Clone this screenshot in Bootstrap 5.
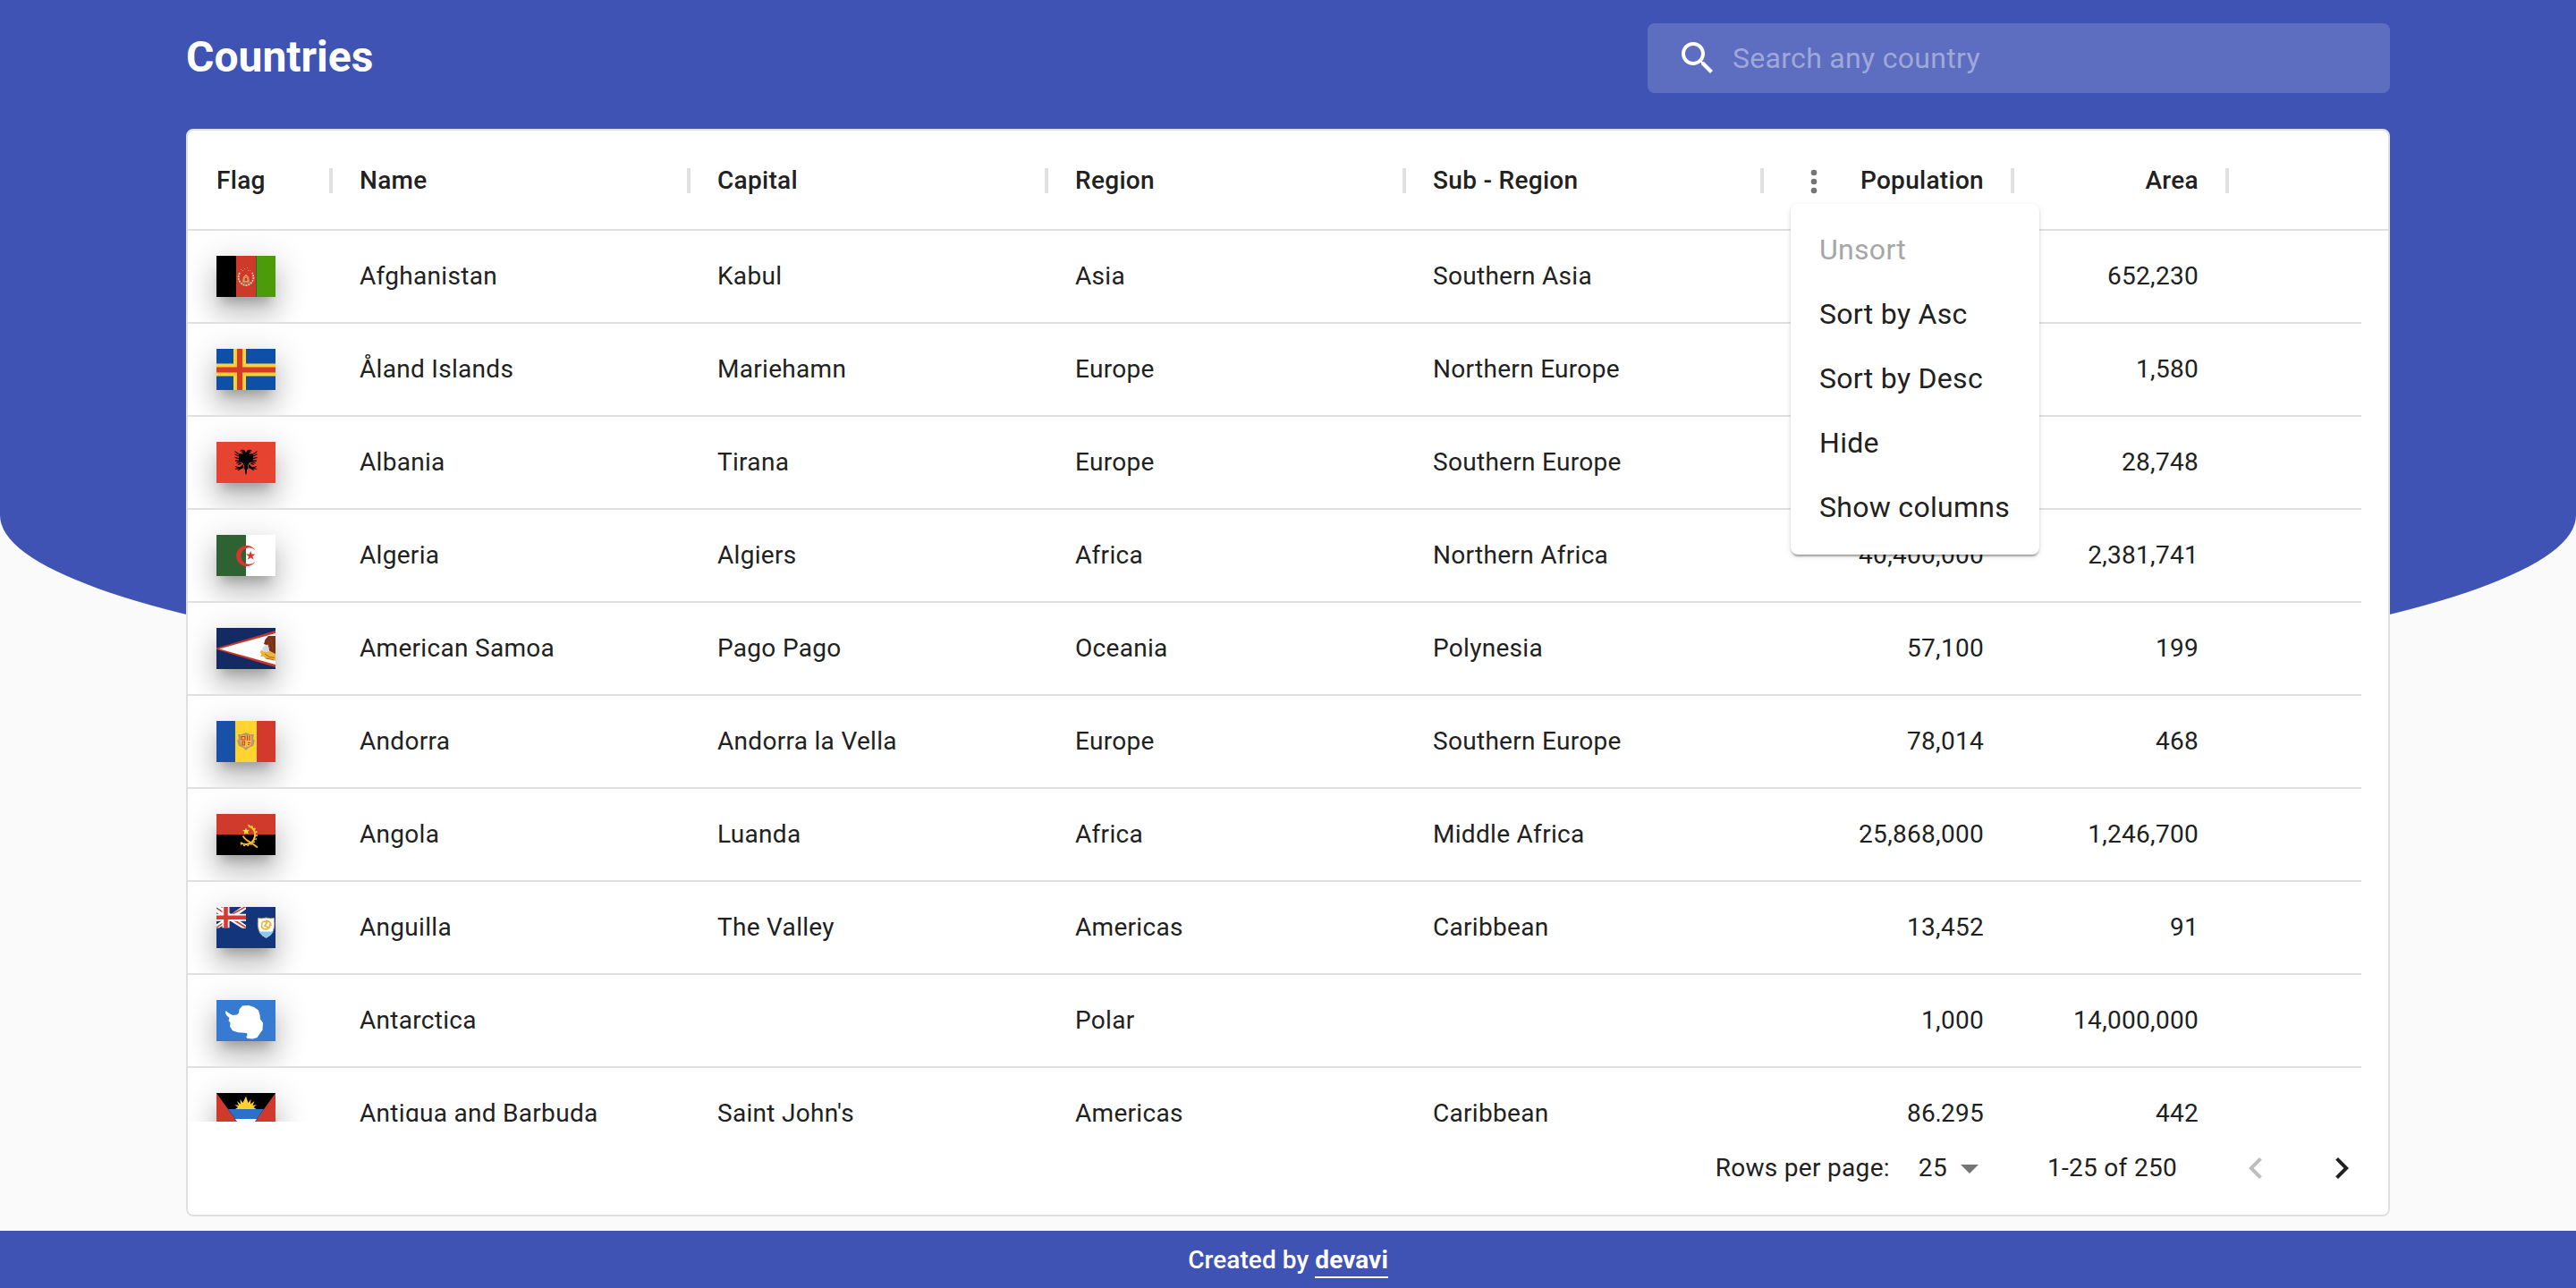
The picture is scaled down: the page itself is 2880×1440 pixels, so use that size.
<!DOCTYPE html>
<html lang="en">
<head>
<meta charset="utf-8">
<title>Countries</title>
<link href="https://cdn.jsdelivr.net/npm/bootstrap@5.3.0/dist/css/bootstrap.min.css" rel="stylesheet">
<style>
:root{--brand:#3f53b4;--line:#e0e0e0;--ink:#212121}
html,body{height:100%}
body{font-family:Roboto,"Liberation Sans",sans-serif;font-size:28px;line-height:1.43;letter-spacing:.3px;color:var(--ink);background:#fafafa;overflow:hidden}
.backdrop-curve{height:790px;background:var(--brand);border-radius:0 0 50% 50%/0 0 214px 214px;z-index:-1}
.page-wrap{width:2464px}
.top-bar{height:144px;padding-top:26px}
.page-title{font-size:48px;font-weight:700;line-height:1;letter-spacing:0;margin-top:14px}
.search-box{width:830px;height:78px;border-radius:8px;background:rgba(255,255,255,.16);padding:0 32px}
.search-box input{background:none;border:0;outline:0;color:#fff;font-size:32px;letter-spacing:.3px;padding:0;margin:2px 0 0 15px;height:40px}
.search-box input::placeholder{color:#9fa8da;opacity:1}
.grid-card{height:1216px;border:2px solid var(--line);border-radius:8px}
.grid-head{height:112px;border-bottom:2px solid var(--line);font-weight:500}
.grid-body{height:996px}
.grid-line{height:104px;width:2430px;border-bottom:2px solid var(--line)}
.cell{padding:0 32px;overflow:hidden;white-space:nowrap;display:flex;align-items:center;height:100%;flex:none}
.grid-head .cell{overflow:visible;position:relative;padding-top:3px}
.grid-head .cell::after{content:"";position:absolute;right:-2px;top:42px;width:4px;height:28px;background:var(--line)}
.c-flag{width:160px}.c-text{width:400px}.c-pop{width:280px;justify-content:flex-end}.c-area{width:240px;justify-content:flex-end}
.flag{width:66px;height:46px;flex:none;display:block;box-shadow:0 12px 12px -6px rgba(0,0,0,.2),0 20px 28px 2px rgba(0,0,0,.14),0 8px 36px 6px rgba(0,0,0,.12)}
.dots{margin-right:32px}
.col-menu{left:1792px;top:82px;width:278px;padding:16px 0;border:0;border-radius:8px;background:#fff;z-index:5;font-size:32px;box-shadow:0 4px 2px -2px rgba(0,0,0,.2),0 2px 2px rgba(0,0,0,.14),0 2px 6px rgba(0,0,0,.12)}
.col-menu .dropdown-item{height:72px;line-height:48px;padding:11px 32px 13px;color:var(--ink)}
.col-menu .disabled{color:#a6a6a6}
.pager{height:104px;padding-right:4px}
.pager-size{margin-left:32px}
.pager-size svg{margin:0 -1px 0 1px}
.pager-range{margin:0 40px 0 64px}
.pager-btn{width:96px;height:96px;padding:0;border:0;background:none}
.site-foot{height:64px;margin-top:16px;padding-top:2px;background:var(--brand);font-weight:500;letter-spacing:.08px}
.site-foot a{color:#fff;font-weight:700;border-bottom:2px solid #fff;padding-bottom:2px}
svg{display:block}
</style>
<script src="https://cdn.jsdelivr.net/npm/bootstrap@5.3.0/dist/js/bootstrap.bundle.min.js"></script>
</head>
<body>
<div class="backdrop-curve position-absolute top-0 start-0 w-100"></div>
<div class="page-wrap mx-auto">
  <header class="top-bar d-flex justify-content-between align-items-start">
    <h1 class="page-title text-white mb-0">Countries</h1>
    <label class="search-box d-flex align-items-center">
      <svg width="48" height="48" viewBox="0 0 24 24" fill="#fff"><path d="M15.5 14h-.79l-.28-.27C15.41 12.59 16 11.11 16 9.5 16 5.91 13.09 3 9.5 3S3 5.91 3 9.5 5.91 16 9.5 16c1.61 0 3.09-.59 4.23-1.57l.27.28v.79l5 4.99L20.49 19l-4.99-5zm-6 0C7.01 14 5 11.99 5 9.5S7.01 5 9.5 5 14 7.01 14 9.5 11.99 14 9.5 14z"/></svg>
      <input class="flex-grow-1" type="text" placeholder="Search any country">
    </label>
  </header>

  <main class="grid-card bg-white position-relative">
    <div class="grid-head d-flex">
      <div class="cell c-flag">Flag</div><div class="cell c-text">Name</div><div class="cell c-text">Capital</div><div class="cell c-text">Region</div><div class="cell c-text">Sub - Region</div>
      <div class="cell c-pop"><svg class="dots" width="40" height="40" viewBox="0 0 24 24" fill="#757575"><circle cx="12" cy="6" r="2"/><circle cx="12" cy="12" r="2"/><circle cx="12" cy="18" r="2"/></svg>Population</div>
      <div class="cell c-area">Area</div>
    </div>
    <div class="grid-body overflow-hidden">
      <div class="grid-line d-flex"><div class="cell c-flag">
        <svg class="flag" viewBox="0 0 66 46"><path fill="#000" d="M0 0h22v46H0z"/><path fill="#cd3a2a" d="M22 0h22v46H22z"/><path fill="#4b9b0b" d="M44 0h22v46H44z"/><path fill="#2c6340" d="M44 0h1v46h-1z"/><path d="M26 19q-3 6 .5 10.500 3 3.500 6.500 3.500t6.500-3.500q3.500-4.500.5-10.500" fill="none" stroke="#f0d3b5" stroke-width="1.800" stroke-dasharray="2 1"/><path d="M29.500 28.500l1-4.500 2.500-3 2.500 3 1 4.500zM28.500 30h9" fill="#dd7d4c" stroke="#eebd90" stroke-width=".7"/><path d="M32 25h2v3h-2z" fill="#b8321f"/><path d="M31 14.500h1m2-1h1m0 3h1m-7 0h1m-3-1h1m9 1h1" stroke="#f09a60"/></svg>
      </div><div class="cell c-text">Afghanistan</div><div class="cell c-text">Kabul</div><div class="cell c-text">Asia</div><div class="cell c-text">Southern Asia</div><div class="cell c-pop">27,657,145</div><div class="cell c-area">652,230</div></div>

      <div class="grid-line d-flex"><div class="cell c-flag">
        <svg class="flag" viewBox="0 0 66 46"><path fill="#0e4fa8" d="M0 0h66v46H0z"/><path fill="#ffd130" d="M19 0h14v46H19zM0 16.500h66v14H0z"/><path fill="#d63a2a" d="M23 0h6v46h-6zM0 20.500h66v6H0z"/></svg>
      </div><div class="cell c-text">Åland Islands</div><div class="cell c-text">Mariehamn</div><div class="cell c-text">Europe</div><div class="cell c-text">Northern Europe</div><div class="cell c-pop">28,875</div><div class="cell c-area">1,580</div></div>

      <div class="grid-line d-flex"><div class="cell c-flag">
        <svg class="flag" viewBox="0 0 66 46"><path fill="#e64330" d="M0 0h66v46H0z"/><g id="eagle"><path d="M33.200 13l-1.200-3q-1.500-1.500-3.500-1.200-2 .4-2.300 1.700 2-.5 3 .3l-2.200.7 2.200.8.3 1.200-4.500-.5v9l4.500 1.500 1.500 3-.5 3 1.500 2 .2 3 1 2.500z"/><path d="M26 14l-5.500-4 .2 1.500 4.300 3zM26 16l-5.500-2.800v1.400l5.500 2.500zM26 18.300l-5.500-1.600v1.300l5.500 1.500zM26 20.600h-5v1.200l5 .2zM26 22.300l-4 .8.800 1.200 4-1zM27 23.500l-3.500 1.700 1 .9 4-1.600zM30 25l-4 3.200-5-1v.9l3.300.8-3.500 1v.8l4.700-.8-2 1.400 1 .6 5.500-3z"/></g><use href="#eagle" transform="matrix(-1 0 0 1 66 0)"/></svg>
      </div><div class="cell c-text">Albania</div><div class="cell c-text">Tirana</div><div class="cell c-text">Europe</div><div class="cell c-text">Southern Europe</div><div class="cell c-pop">2,886,026</div><div class="cell c-area">28,748</div></div>

      <div class="grid-line d-flex"><div class="cell c-flag">
        <svg class="flag" viewBox="0 0 66 46"><path fill="#fff" d="M0 0h66v46H0z"/><path fill="#2e6232" d="M0 0h33v46H0z"/><path fill="#d8362a" d="M43.500 17.200a11.600 11.600 0 1 0 0 12.600 9.300 9.300 0 1 1 0-12.600zM38.300 17.800l1.100 3.800 4-.1-3.100 2.400 1.400 3.900-3.400-2.300-3.400 2.300 1.200-3.900-3.200-2.400 4 .1z"/></svg>
      </div><div class="cell c-text">Algeria</div><div class="cell c-text">Algiers</div><div class="cell c-text">Africa</div><div class="cell c-text">Northern Africa</div><div class="cell c-pop">40,400,000</div><div class="cell c-area">2,381,741</div></div>

      <div class="grid-line d-flex"><div class="cell c-flag">
        <svg class="flag" viewBox="0 0 66 46"><path fill="#142a63" d="M0 0h66v46H0z"/><path fill="#c8362a" d="M66 3L0 22.500v1.500L66 44z"/><path fill="#fff" d="M66 6L3 23.500 66 41z"/><path d="M66 9l-8 0-3.500 4-1.500 5 4 1.500 2 6 3 3 4 1z" fill="#7a2f17"/><path d="M51 24l2.500-4 4-1.500 1.500 5-2 4-5-1z" fill="#d5d9e0"/><path d="M48.500 27l1.500-1.500-1-1.500 4 2.500 4 .5 2-1.500 7 3.500v8l-5-2-6 0-2-3-4 0 1.500-2.500z" fill="#eeb340"/><path d="M54 29l5 3.500 6 1m-9 .5 8 2M61 12l2 13m-5-11 2 9" stroke="#8d4a20" fill="none" stroke-width=".8"/></svg>
      </div><div class="cell c-text">American Samoa</div><div class="cell c-text">Pago Pago</div><div class="cell c-text">Oceania</div><div class="cell c-text">Polynesia</div><div class="cell c-pop">57,100</div><div class="cell c-area">199</div></div>

      <div class="grid-line d-flex"><div class="cell c-flag">
        <svg class="flag" viewBox="0 0 66 46"><path fill="#1950a8" d="M0 0h21v46H0z"/><path fill="#ffd42f" d="M21 0h24v46H21z"/><path fill="#d33a2c" d="M45 0h21v46H45z"/><path d="M24 15l4 0 5-2 5 2 4 0-1 5 2 2-2 6-5 2-3 3-3-3-5-2-2-6 2-2z" fill="#b99a6c"/><path d="M27 16.500h12v7l-1 4-5 2-5-2-1-4z" fill="#f6c045"/><path d="M28 17.500h4v3.500h-4zM29 23h2.500v4H29zM34.500 16.500v5.500m2.500-5.500v5.500M35 24.500h3m-3 2h2" fill="none" stroke="#cf3b2c" stroke-width="1.200"/></svg>
      </div><div class="cell c-text">Andorra</div><div class="cell c-text">Andorra la Vella</div><div class="cell c-text">Europe</div><div class="cell c-text">Southern Europe</div><div class="cell c-pop">78,014</div><div class="cell c-area">468</div></div>

      <div class="grid-line d-flex"><div class="cell c-flag">
        <svg class="flag" viewBox="0 0 66 46"><path fill="#cf3a2d" d="M0 0h66v23H0z"/><path d="M0 23h66v23H0z"/><path d="M36 13.500q8 2.500 7 11.500-1.500 8.500-10 9-3 0-6-2" fill="none" stroke="#fbc92c" stroke-width="2"/><path d="M35 12.500q11 2 10 12.500-2 10-12 10.500-4 0-6-2" fill="none" stroke="#fbc92c" stroke-width="1.500" stroke-dasharray="2 2"/><path d="M29.500 24.500q3 5 8.500 7l8 6" fill="none" stroke="#f7b53a" stroke-width="1.800"/><path fill="#fddc35" d="M33 15.500l1 2.500 3-.2-2 2.200 1 2.800-2.700-1.400-2.500 1.600.5-3-2.300-1.700 3-.3z"/></svg>
      </div><div class="cell c-text">Angola</div><div class="cell c-text">Luanda</div><div class="cell c-text">Africa</div><div class="cell c-text">Middle Africa</div><div class="cell c-pop">25,868,000</div><div class="cell c-area">1,246,700</div></div>

      <div class="grid-line d-flex"><div class="cell c-flag">
        <svg class="flag" viewBox="0 0 66 46"><path fill="#12357c" d="M0 0h66v46H0z"/><svg width="33" height="23.500" viewBox="0 0 33 23.500"><path d="M-12 -4L33 23.500M33-.5L-2 24" stroke="#fff" stroke-width="5"/><path d="M-2 -2L33 23.500" stroke="#fff" stroke-width="5"/><path d="M12 10L33 23M11 12L33-.5M0 1l9 6M0 23l9-6" stroke="#d33a34" stroke-width="1.500"/><path d="M10.500 0v23.500M0 11.800h33" stroke="#fff" stroke-width="8"/><path d="M10.500 0v23.500M0 11.800h33" stroke="#d63a32" stroke-width="4.600"/></svg><path d="M46.500 12.500q4 1 9-.5 5 1.500 9 .5 1 9-1 14-3 6-8 8-5-2-8-8-2-5-1-14z" fill="#fff" stroke="#ad9d83"/><path d="M47.300 27.500h16.400q-3 5-8.200 7-5-2-8.200-7z" fill="#8cc7f0"/><path d="M55 15q6 1 6 6M60 19q0 6-6 6M54 25q-5-2-3-7M51 18q1-3 6-1M57 17l-3 4 4 2" fill="none" stroke="#eeb33b" stroke-width="1.700"/></svg>
      </div><div class="cell c-text">Anguilla</div><div class="cell c-text">The Valley</div><div class="cell c-text">Americas</div><div class="cell c-text">Caribbean</div><div class="cell c-pop">13,452</div><div class="cell c-area">91</div></div>

      <div class="grid-line d-flex"><div class="cell c-flag">
        <svg class="flag" viewBox="0 0 66 46"><path fill="#367bd1" d="M0 0h66v46H0z"/><path fill="#fff" d="M10.500 12l3 2.500 4.500 2.500 5-.5 2-2 .5-4 3.500-4 7-.5 6 2 5 3.500 1.500 5 .5 5 3 4-.5 8-3 4-3 4.500-5 1.500-6-.5-1.500-2 1.500-1-.5-3-10-.8-6-2-3-4.700.5-4-2-2.500 1-3-3-2.500-1.500-3z"/></svg>
      </div><div class="cell c-text">Antarctica</div><div class="cell c-text"></div><div class="cell c-text">Polar</div><div class="cell c-text"></div><div class="cell c-pop">1,000</div><div class="cell c-area">14,000,000</div></div>

      <div class="grid-line d-flex"><div class="cell c-flag">
        <svg class="flag" viewBox="0 0 66 46"><path fill="#cf3a2d" d="M0 0h66v46H0z"/><path d="M0 0h66L33 46z"/><path fill="#ffd12f" d="M21 18l3-2-3.500-3 4.500 1-2-5 4 3.500-.5-5.500 3 4 3.500-7.500 2.500 7.500 3-4-.5 5.500 4.500-3.500-2 5 4.500-1-3.500 3 3 2z"/><path fill="#2b70c9" d="M13 18h40l-7.900 11H20.900z"/><path fill="#fff" d="M20.900 29h24.200L33 46z"/></svg>
      </div><div class="cell c-text">Antigua and Barbuda</div><div class="cell c-text">Saint John's</div><div class="cell c-text">Americas</div><div class="cell c-text">Caribbean</div><div class="cell c-pop">86,295</div><div class="cell c-area">442</div></div>
    </div>

    <div class="pager d-flex align-items-center justify-content-end">
      <span>Rows per page:</span>
      <span class="pager-size d-flex align-items-center">25<svg width="48" height="48" viewBox="0 0 24 24" fill="#757575"><path d="M7 10l5 5 5-5z"/></svg></span>
      <span class="pager-range">1-25 of 250</span>
      <button class="pager-btn d-flex align-items-center justify-content-center" disabled><svg width="48" height="48" viewBox="0 0 24 24" fill="#bdbdbd"><path d="M15.410 16.590L10.830 12l4.580-4.590L14 6l-6 6 6 6z"/></svg></button>
      <button class="pager-btn d-flex align-items-center justify-content-center"><svg width="48" height="48" viewBox="0 0 24 24" fill="#212121"><path d="M8.590 16.590L13.170 12 8.590 7.410 10 6l6 6-6 6z"/></svg></button>
    </div>

    <div class="col-menu position-absolute">
      <a class="dropdown-item disabled">Unsort</a><a class="dropdown-item">Sort by Asc</a><a class="dropdown-item">Sort by Desc</a><a class="dropdown-item">Hide</a><a class="dropdown-item">Show columns</a>
    </div>
  </main>
</div>
<footer class="site-foot d-flex align-items-center justify-content-center text-white"><span>Created by <a class="text-decoration-none">devavi</a></span></footer>
</body>
</html>
